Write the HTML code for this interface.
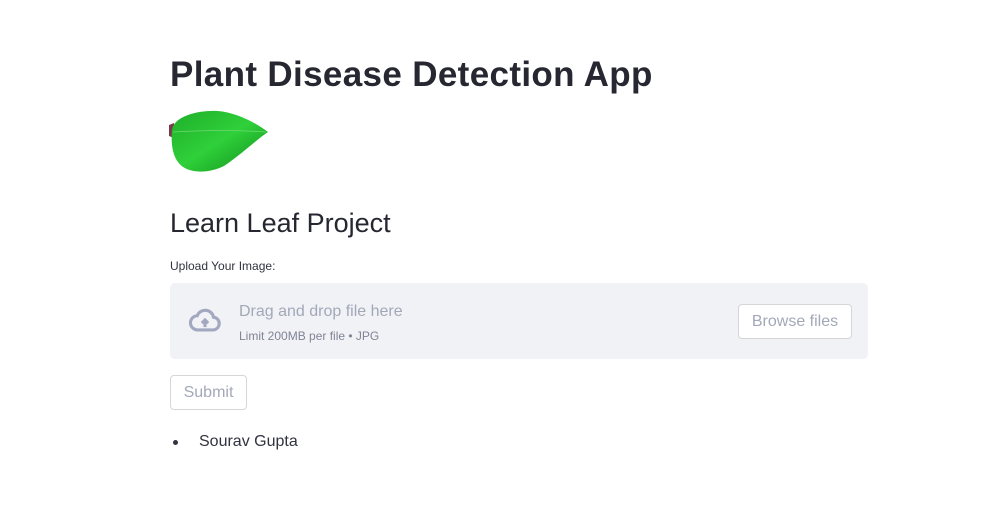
<!DOCTYPE html>
<html><head><meta charset="utf-8"><style>
body{margin:0;width:1003px;height:506px;background:#fff;font-family:"Liberation Sans",sans-serif;color:#31333f;position:relative;overflow:hidden}
.a{position:absolute}
h1{position:absolute;left:170px;top:55px;margin:0;font-size:35px;font-weight:bold;color:#262730;letter-spacing:0.35px}
</style></head><body>
<h1>Plant Disease Detection App</h1>
<svg class="a" style="left:168px;top:108px" width="102" height="66" viewBox="0 0 102 66">
<defs><linearGradient id="g" x1="0" y1="0" x2="1" y2="1"><stop offset="0" stop-color="#1fae2a"/><stop offset="0.5" stop-color="#2fd03a"/><stop offset="1" stop-color="#0f8e1a"/></linearGradient></defs>
<path d="M1 17 L6 15 L6 30 L1 28Z" fill="#7a3a4a"/>
<path d="M4 22 C6 8 30 2 50 3 C70 5 88 15 100 24 C88 32 74 46 56 58 C40 66 18 66 10 54 C4 46 3 34 4 22Z" fill="url(#g)"/>
<path d="M5 24 C40 22 70 22 98 24" stroke="#6fd870" stroke-width="0.8" fill="none"/>
</svg>
<div class="a" style="left:170px;top:208px;font-size:27px;color:#262730">Learn Leaf Project</div>
<div class="a" style="left:170px;top:259px;font-size:12px;color:#31333f">Upload Your Image:</div>
<div class="a" style="left:170px;top:283px;width:698px;height:76px;background:#f0f2f6;border-radius:5px"></div>
<svg class="a" style="left:184px;top:303px" width="42" height="34" viewBox="0 0 24 24" fill="none" stroke="#a3a8c0" stroke-width="2.2"><path d="M7 19 H17 A4.5 4.5 0 0 0 18 10 A6 6 0 0 0 6.5 9 A5 5 0 0 0 7 19Z"/><path d="M12 17 V12.5" /><path d="M9.8 14.2 L12 12 L14.2 14.2" fill="#a3a8c0"/></svg>
<div class="a" style="left:239px;top:303px;font-size:16px;color:#a3a8b8">Drag and drop file here</div>
<div class="a" style="left:239px;top:329px;font-size:12px;color:#808495">Limit 200MB per file • JPG</div>
<div class="a" style="left:738px;top:304px;width:112px;height:33px;border:1px solid #d6d6d9;border-radius:4px;background:#fff;font-size:16px;color:#a3a8b8;text-align:center;line-height:33px">Browse files</div>
<div class="a" style="left:170px;top:375px;width:75px;height:33px;border:1px solid #d6d6d9;border-radius:4px;background:#fff;font-size:16px;color:#a3a8b8;text-align:center;line-height:33px">Submit</div>
<div class="a" style="left:173px;top:440px;width:5px;height:5px;border-radius:50%;background:#31333f"></div>
<div class="a" style="left:199px;top:433px;font-size:16px;color:#31333f">Sourav Gupta</div>
</body></html>
